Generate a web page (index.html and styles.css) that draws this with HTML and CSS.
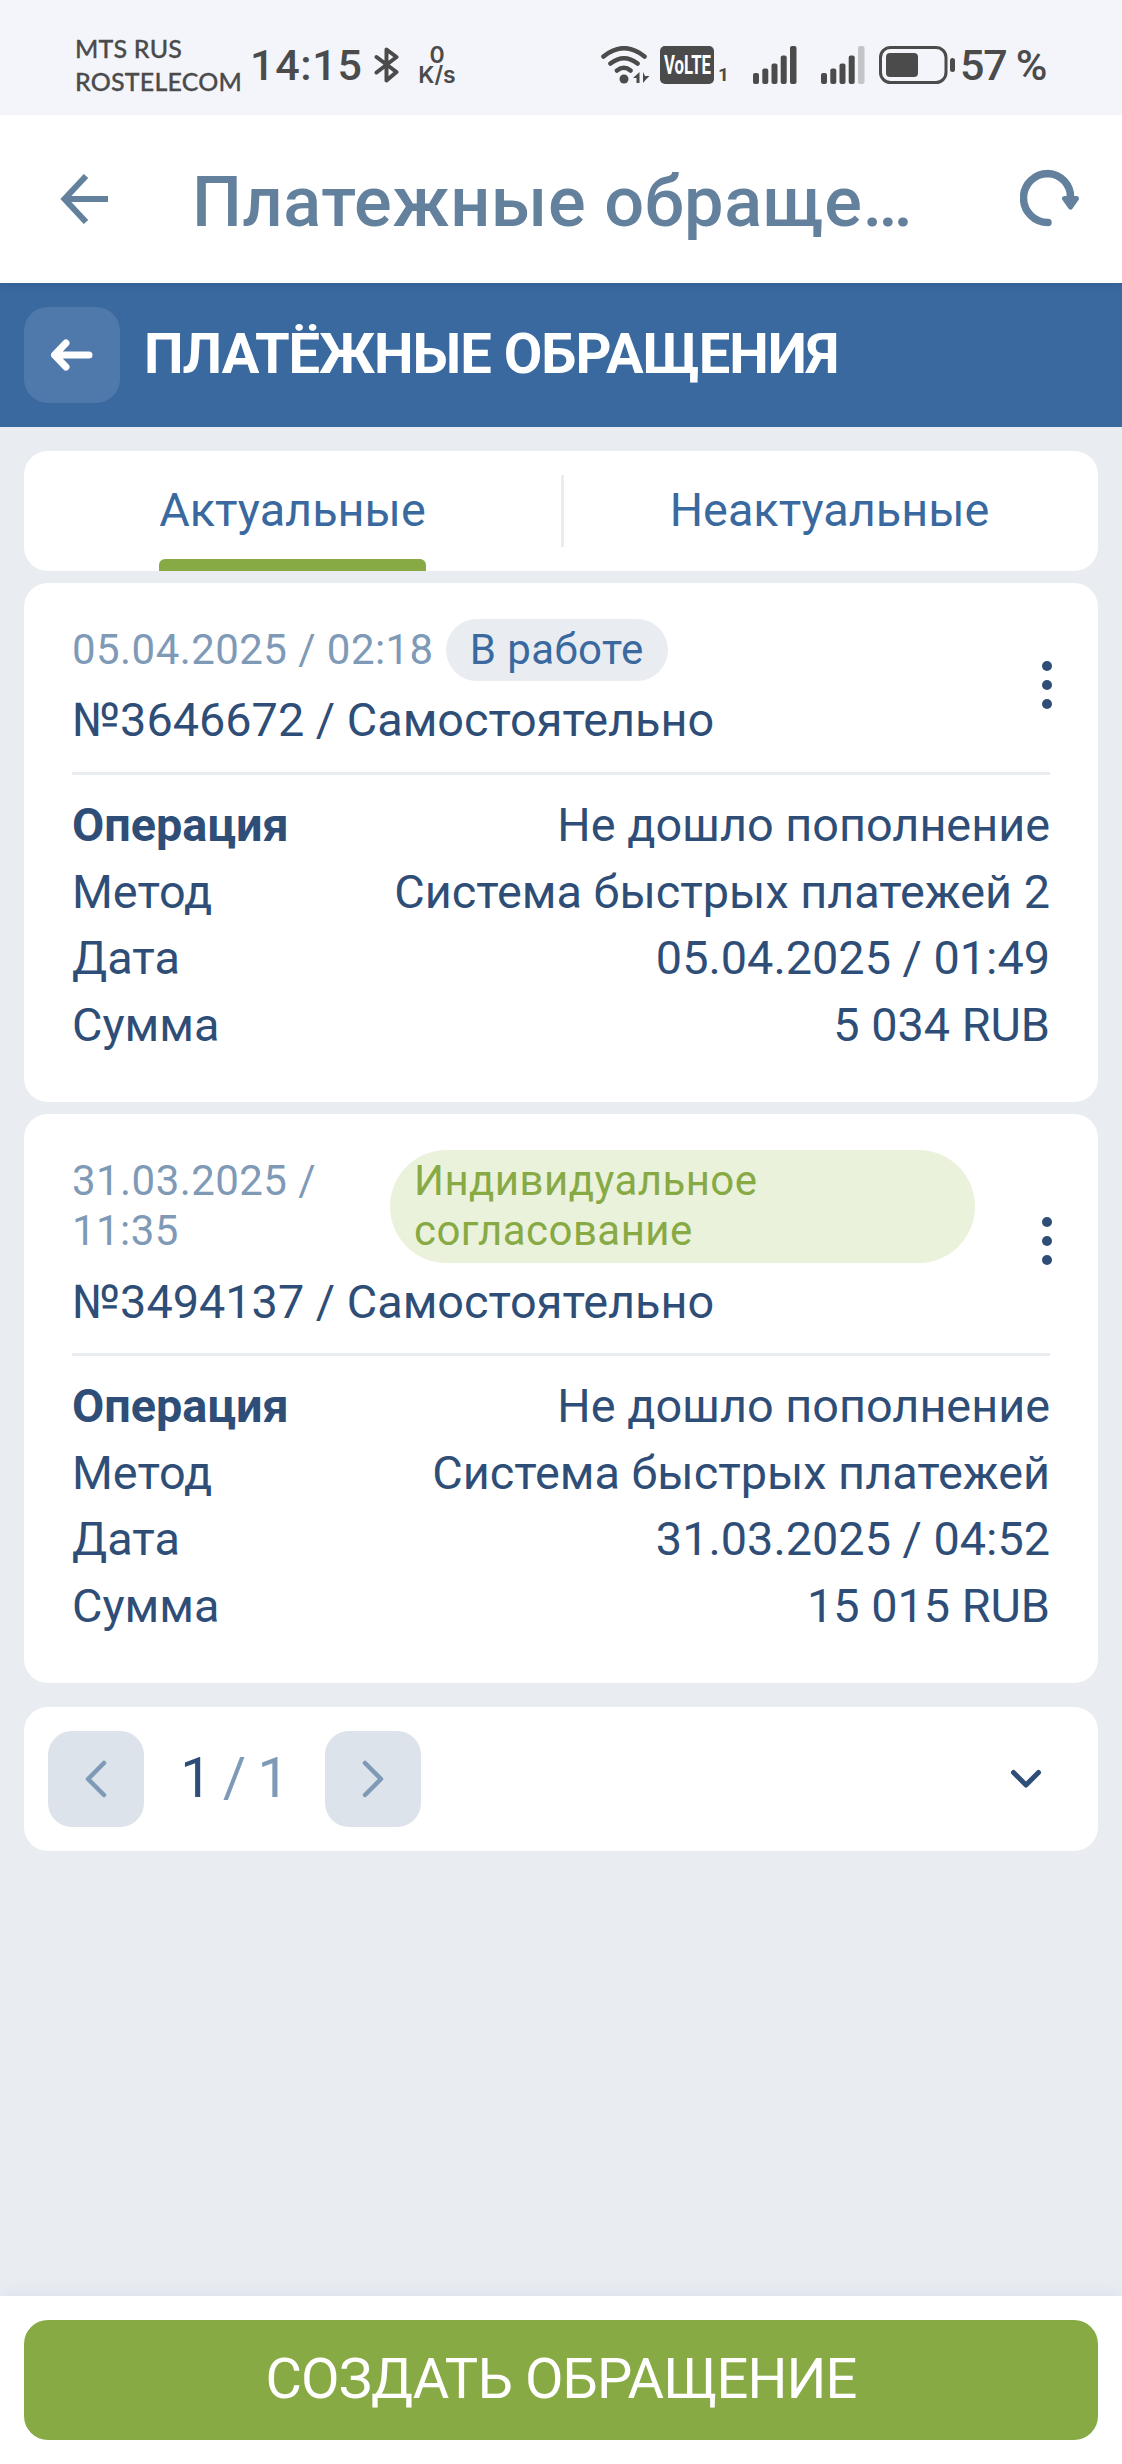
FILE: index.html
```html
<!DOCTYPE html>
<html lang="ru">
<head>
<meta charset="utf-8">
<title>Платёжные обращения</title>
<link rel="stylesheet" href="styles.css">
</head>
<body>
<div class="status">
  <div class="carrier"><span>MTS RUS</span><span>ROSTELECOM</span></div>
  <span class="clock">14:15</span>
  <svg class="bt" width="26" height="38" viewBox="0 0 26 38" fill="none" stroke="#4b4b4b" stroke-width="4" stroke-linejoin="round" stroke-linecap="round"><path d="M2.500 11 22.500 26 12.500 34.500V3.500l10 7.500L2.500 26.500"/></svg>
  <div class="speed"><span>0</span><span>K/s</span></div>
  <svg class="wifi" width="49" height="38" viewBox="0 0 49 38" fill="none" stroke="#4b4b4b" stroke-width="4.600" stroke-linecap="round"><path d="M2.500 10.500Q23 -6 43.500 10.500M9.500 17.500Q23 7 36.500 17.500M16 24.500Q23 19 29.500 24.500"/><circle cx="23" cy="33" r="4.500" fill="#4b4b4b" stroke="none"/><path d="M38.500 26v11h-3v-5h-3.500zM42 37V26l2 4h4.500l-3.500 3.500z" fill="#4b4b4b" stroke="none"/></svg>
  <svg class="volte" width="54" height="38" viewBox="0 0 54 38"><rect width="54" height="38" rx="5" fill="#4b4b4b"/><text x="4" y="28" textLength="47" lengthAdjust="spacingAndGlyphs">VoLTE</text></svg>
  <span class="sim">1</span>
  <svg class="sig1" width="44" height="38" viewBox="0 0 44 38" fill="#4b4b4b"><rect x="0" y="27" width="6" height="11" rx="2"/><rect x="9.300" y="22.500" width="6" height="15.500" rx="2"/><rect x="18.500" y="17.500" width="6" height="20.500" rx="2"/><rect x="27.700" y="9.500" width="6" height="28.500" rx="2"/><rect x="37" y="0" width="6.500" height="38" rx="2"/></svg>
  <svg class="sig2" width="44" height="38" viewBox="0 0 44 38" fill="#4b4b4b"><rect x="0" y="27" width="6" height="11" rx="2"/><rect x="9.300" y="22.500" width="6" height="15.500" rx="2"/><rect x="18.500" y="17.500" width="6" height="20.500" rx="2"/><rect x="27.700" y="9.500" width="6" height="28.500" rx="2"/><rect x="37" y="0" width="6.500" height="38" rx="2" fill="#c4c5c9"/></svg>
  <svg class="battery" width="78" height="38" viewBox="0 0 78 38" fill="#4b4b4b"><rect x="1.500" y="1.500" width="65.500" height="35" rx="10" fill="none" stroke="#4b4b4b" stroke-width="3"/><rect x="7" y="7" width="32" height="24" rx="4"/><rect x="71" y="12" width="5" height="14" rx="2.500"/></svg>
  <span class="percent">57 %</span>
</div>
<header class="appbar">
  <svg class="back" width="50" height="50" viewBox="0 0 50 50" fill="none" stroke="#63809d" stroke-width="6"><path d="M26 2 4.500 25 26 48M4.500 25H48"/></svg>
  <h1>Платежные обраще…</h1>
  <svg class="reload" width="62" height="60" viewBox="0 0 62 60" fill="none" stroke="#63809d" stroke-width="7.500" stroke-linecap="round" stroke-linejoin="round"><path d="M28 53.500A24.500 24.500 0 0 1 28 4.500A23.500 23.500 0 0 1 50.500 29"/><path d="M44.500 29.500h12L50.500 38z" fill="#63809d" stroke-width="5"/></svg>
</header>
<nav class="titlebar">
  <button class="square"><svg width="42" height="32" viewBox="0 0 42 32" fill="none" stroke="#fff" stroke-width="7" stroke-linecap="round" stroke-linejoin="round"><path d="M15 4 3.500 16 15 28M4 16H38"/></svg></button>
  <h2>ПЛАТЁЖНЫЕ ОБРАЩЕНИЯ</h2>
</nav>
<main>
  <div class="tabs">
    <div class="tab first"><span class="active">Актуальные</span></div>
    <i class="sep"></i>
    <div class="tab second"><span>Неактуальные</span></div>
  </div>
  <article class="card">
    <div class="head">
      <div class="info">
        <div class="meta"><time>05.04.2025 / 02:18</time><span class="chip">В работе</span></div>
        <div class="name">№3646672 / Самостоятельно</div>
      </div>
      <svg class="dots" width="10" height="48" viewBox="0 0 10 48" fill="#2f4e77"><circle cx="5" cy="5" r="5"/><circle cx="5" cy="24" r="5"/><circle cx="5" cy="43" r="5"/></svg>
    </div>
    <dl>
      <div><dt class="strong">Операция</dt><dd>Не дошло пополнение</dd></div>
      <div><dt>Метод</dt><dd>Система быстрых платежей 2</dd></div>
      <div><dt>Дата</dt><dd>05.04.2025 / 01:49</dd></div>
      <div><dt>Сумма</dt><dd>5 034 RUB</dd></div>
    </dl>
  </article>
  <article class="card">
    <div class="head">
      <div class="info">
        <div class="meta wide"><time>31.03.2025 / 11:35</time><span class="chip green">Индивидуальное согласование</span></div>
        <div class="name">№3494137 / Самостоятельно</div>
      </div>
      <svg class="dots" width="10" height="48" viewBox="0 0 10 48" fill="#2f4e77"><circle cx="5" cy="5" r="5"/><circle cx="5" cy="24" r="5"/><circle cx="5" cy="43" r="5"/></svg>
    </div>
    <dl>
      <div><dt class="strong">Операция</dt><dd>Не дошло пополнение</dd></div>
      <div><dt>Метод</dt><dd>Система быстрых платежей</dd></div>
      <div><dt>Дата</dt><dd>31.03.2025 / 04:52</dd></div>
      <div><dt>Сумма</dt><dd>15 015 RUB</dd></div>
    </dl>
  </article>
  <div class="pager">
    <button class="square"><svg width="22" height="38" viewBox="0 0 22 38" fill="none" stroke="#7f9ab7" stroke-width="4.500" stroke-linecap="round" stroke-linejoin="round"><path d="M19 3 3 19 19 35"/></svg></button>
    <span class="pages"><b>1</b> / 1</span>
    <button class="square"><svg width="22" height="38" viewBox="0 0 22 38" fill="none" stroke="#7f9ab7" stroke-width="4.500" stroke-linecap="round" stroke-linejoin="round"><path d="M3 3 19 19 3 35"/></svg></button>
    <svg class="expand" width="32" height="20" viewBox="0 0 32 20" fill="none" stroke="#2f4e77" stroke-width="5" stroke-linecap="round" stroke-linejoin="round"><path d="M3.500 3.500 16 16 28.500 3.500"/></svg>
  </div>
</main>
<footer><button class="create">СОЗДАТЬ ОБРАЩЕНИЕ</button></footer>
</body>
</html>
```
FILE: styles.css
```css
* { box-sizing: border-box; margin: 0; }
body {
  width: 1122px;
  height: 2464px;
  display: flex;
  flex-direction: column;
  background: #e9edf2;
  color: #2f4e77;
  font-family: Roboto, "Liberation Sans", sans-serif;
  font-size: 46.800px;
  line-height: 57.600px;
  overflow: hidden;
}
svg { display: block; flex: none; }
button { border: 0; padding: 0; font: inherit; }
.status {
  position: relative;
  z-index: 1;
  height: 115px;
  padding-left: 75px;
  padding-top: 15px;
  display: flex;
  align-items: center;
  background: #f4f5fa;
  color: #4b4b4b;
  white-space: nowrap;
}
.status > * { flex: none; }
.carrier { width: 175px; display: flex; flex-direction: column; font: 500 25px/33px Lato, sans-serif; letter-spacing: 0.200px; -webkit-text-stroke: 0.300px #4b4b4b; }
.clock { width: 124px; font-size: 43px; line-height: 50px; font-weight: 500; letter-spacing: 0.700px; }
.speed { width: 44px; margin-left: 15px; display: flex; flex-direction: column; align-items: center; font: 600 23px/20px Inter, sans-serif; }
.wifi { margin-left: 142px; }
.volte { margin-left: 10px; }
.volte text { fill: #fff; font: 700 26px Roboto, sans-serif; }
.sim { width: 10px; margin-left: 4px; margin-top: 20px; font: 700 19px/20px Roboto, sans-serif; }
.sig1 { margin-left: 25px; }
.sig2 { margin-left: 24px; }
.battery { margin-left: 14px; }
.percent { margin-left: 3px; font-size: 43px; line-height: 50px; font-weight: 500; letter-spacing: -1.300px; }
.appbar { position: relative; height: 168px; display: flex; align-items: center; background: #fff; color: #63809d; box-shadow: 0 1px 9px rgba(20, 50, 90, 0.2); }
.back { margin-left: 60px; }
h1 { margin-left: 82px; padding-top: 6px; width: 730px; font-size: 70.300px; line-height: 84px; font-weight: 500; letter-spacing: 0.550px; white-space: nowrap; }
.reload { margin-left: 98px; }
.titlebar { height: 144px; padding: 0 24px; display: flex; align-items: center; gap: 24px; background: #3a699f; color: #fff; }
.square { width: 96px; height: 96px; border-radius: 24px; display: flex; align-items: center; justify-content: center; background: #dde3ea; }
.titlebar .square { background: #4f79aa; }
h2 { padding-bottom: 2px; font-size: 56px; line-height: 68px; font-weight: 700; letter-spacing: -1px; white-space: nowrap; }
main { flex: 1; padding: 24px 24px 0; display: flex; flex-direction: column; gap: 12px; }
.tabs { height: 120px; border-radius: 24px; background: #fff; color: #3a699f; display: flex; align-items: center; }
.tab { flex: 1; height: 120px; display: flex; justify-content: center; line-height: 118px; }
.first { flex: 0 0 537px; }
.second { padding-right: 3px; }
.active { height: 120px; position: relative; }
.active::after { content: ""; position: absolute; left: 0; right: 0; bottom: 0; height: 12px; border-radius: 6px 6px 0 0; background: #88aa45; }
.sep { width: 3px; height: 72px; background: #e9edf2; }
.card { padding: 36px 48px 39px; border-radius: 24px; background: #fff; }
.head { display: flex; align-items: center; justify-content: space-between; padding-bottom: 22px; border-bottom: 3px solid #e9edf2; }
.dots { margin-right: -2px; }
.meta { display: flex; align-items: center; gap: 12px; font-size: 42px; line-height: 50.400px; letter-spacing: 0.440px; color: #7f9ab7; }
.wide { width: 903px; }
.wide time { width: 306px; }
.chip { padding: 6px 24px; border-radius: 57px; background: #e9edf2; color: #3a699f; }
.green { flex: 1; background: #eaf2dc; color: #88aa45; }
.name { margin-top: 11px; }
dl { padding-top: 22px; }
dl div { display: flex; justify-content: space-between; height: 66.500px; }
.strong { font-weight: 700; }
.pager { height: 144px; margin-top: 12px; padding: 0 24px; border-radius: 24px; background: #fff; display: flex; align-items: center; }
.pages { width: 181px; padding-right: 1px; padding-bottom: 2px; text-align: center; font-size: 56px; letter-spacing: -1.300px; color: #7f9ab7; }
.pages b { font-weight: 400; color: #2f4e77; }
.expand { margin-left: auto; margin-right: 32px; }
footer { height: 168px; padding: 24px; background: #fff; box-shadow: 0 0 18px #d5deea; }
.create { width: 1074px; height: 120px; border-radius: 24px; background: #88aa45; color: #fff; font-size: 56px; letter-spacing: -0.900px; }
```
